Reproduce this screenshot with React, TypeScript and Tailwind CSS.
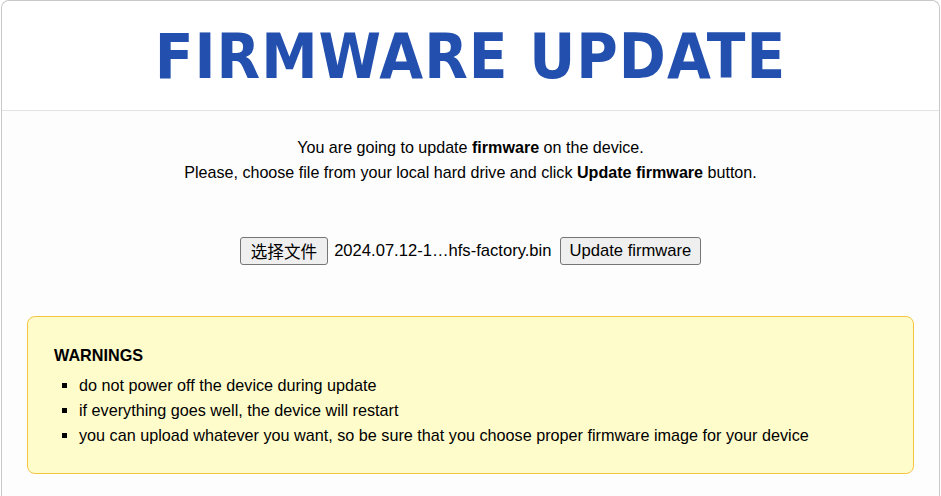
import React from "react";

export default function App() {
  return (
    <div className="min-h-[496px] w-full bg-white" style={{ fontFamily: '"Liberation Sans", Arial, sans-serif' }}>
      <div className="mx-[1px] min-h-[520px] rounded-t-lg border-x border-t border-[#c8c8c8] bg-[#fdfdfd]">
        <div className="flex h-[110px] items-center justify-center rounded-t-lg border-b border-[#e2e2e2] bg-white">
          <h1
            className="pt-[2px] text-[63px] font-bold leading-none tracking-[1px] text-[#2350ae]"
            style={{ fontFamily: '"DejaVu Sans", sans-serif', fontStretch: "condensed" }}
          >
            FIRMWARE UPDATE
          </h1>
        </div>
        <div className="pt-[24px] text-center text-[16.1px] leading-[25px] text-black">
          <p>
            You are going to update <b>firmware</b> on the device.
          </p>
          <p>
            Please, choose file from your local hard drive and click <b>Update firmware</b> button.
          </p>
        </div>
        <div className="mt-[52px] flex items-center justify-center text-[16.6px] text-black">
          <button
            className="h-[28px] rounded-[3px] border border-[#767676] bg-[#efefef] px-[10px] text-[16.6px]"
            style={{ fontFamily: '"Noto Sans CJK SC", sans-serif' }}
          >
            选择文件
          </button>
          <span className="ml-[6px]">2024.07.12-1…hfs-factory.bin</span>
          <button className="ml-[8px] h-[28px] rounded-[3px] border border-[#767676] bg-[#efefef] px-[9px] text-[16.6px]">
            Update firmware
          </button>
        </div>
        <div className="mx-[25px] mt-[51px] rounded-lg border border-[#f5c542] bg-[#fffccc] px-[26px] pb-[25px] pt-[26px] text-[16.2px] text-black">
          <div className="font-bold leading-[24px]">WARNINGS</div>
          <ul className="mt-[6px] list-[square] pl-[25px] leading-[25px]">
            <li>do not power off the device during update</li>
            <li>if everything goes well, the device will restart</li>
            <li>you can upload whatever you want, so be sure that you choose proper firmware image for your device</li>
          </ul>
        </div>
      </div>
    </div>
  );
}
